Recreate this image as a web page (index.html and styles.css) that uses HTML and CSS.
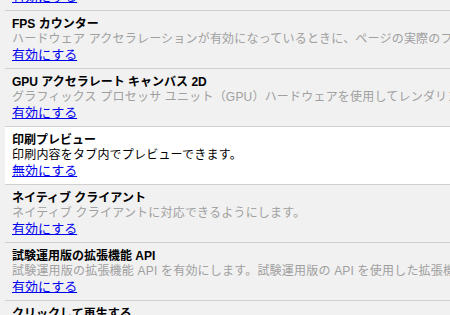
FILE: index.html
```html
<!DOCTYPE html>
<html lang="ja">
<head>
    <meta charset="UTF-8">
    <title>試験運用機能</title>
    <link rel="stylesheet" href="styles.css">
</head>
<body>
<div class="experiment-list">
    <div class="experiment disabled top-cut">
        <div class="exp-name">GPU コンポジティング</div>
        <div class="exp-desc">ハードウェア アクセラレーションによる合成を有効にします。</div>
        <a class="exp-link" href="#">有効にする</a>
    </div>
    <div class="experiment disabled">
        <div class="exp-name">FPS カウンター</div>
        <div class="exp-desc">ハードウェア アクセラレーションが有効になっているときに、ページの実際のフレーム レートを表示します。</div>
        <a class="exp-link" href="#">有効にする</a>
    </div>
    <div class="experiment disabled">
        <div class="exp-name">GPU アクセラレート キャンバス 2D</div>
        <div class="exp-desc">グラフィックス プロセッサ ユニット（GPU）ハードウェアを使用してレンダリングを行います。</div>
        <a class="exp-link" href="#">有効にする</a>
    </div>
    <div class="experiment enabled">
        <div class="exp-name">印刷プレビュー</div>
        <div class="exp-desc">印刷内容をタブ内でプレビューできます。</div>
        <a class="exp-link" href="#">無効にする</a>
    </div>
    <div class="experiment disabled">
        <div class="exp-name">ネイティブ クライアント</div>
        <div class="exp-desc">ネイティブ クライアントに対応できるようにします。</div>
        <a class="exp-link" href="#">有効にする</a>
    </div>
    <div class="experiment disabled">
        <div class="exp-name">試験運用版の拡張機能 API</div>
        <div class="exp-desc">試験運用版の拡張機能 API を有効にします。試験運用版の API を使用した拡張機能はギャラリーにアップロードできません。</div>
        <a class="exp-link" href="#">有効にする</a>
    </div>
    <div class="experiment disabled">
        <div class="exp-name">クリックして再生する</div>
        <div class="exp-desc">プラグインをクリックしたときに再生します。</div>
        <a class="exp-link" href="#">有効にする</a>
    </div>
</div>
</body>
</html>
```
FILE: styles.css
```css
html, body {
    margin: 0;
    padding: 0;
    overflow: hidden;
}
body {
    background-color: #f1f1f1;
    font-family: "Liberation Sans", "Noto Sans CJK JP", sans-serif;
    font-size: 12px;
    color: #000;
}
.experiment-list {
    margin-left: 5px;
}
.experiment {
    border-top: 1px solid #cfcfcf;
    padding: 6px 0 6px 7px;
    white-space: nowrap;
}
.top-cut {
    margin-top: -48px;
}
.experiment.enabled {
    background-color: #fff;
}
.exp-name {
    font-weight: bold;
    font-size: 12px;
    line-height: 15px;
}
.exp-desc {
    line-height: 15px;
    letter-spacing: 0.2px;
}
.disabled .exp-desc {
    color: #a0a0a0;
}
.exp-link {
    display: block;
    font-size: 13px;
    line-height: 15px;
    color: #0000ee;
    text-decoration: underline;
}
```
